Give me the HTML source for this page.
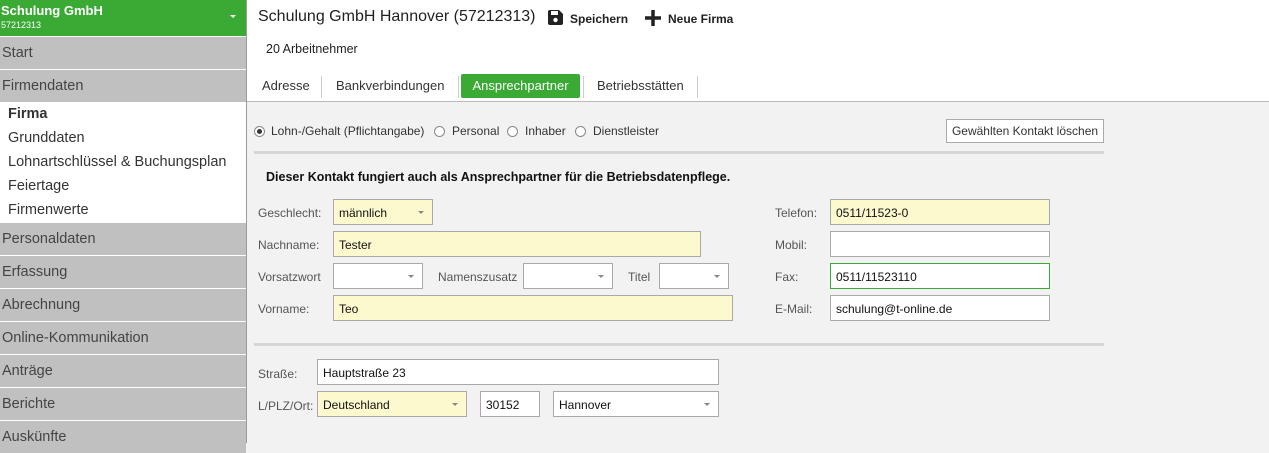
<!DOCTYPE html>
<html><head><meta charset="utf-8"><style>
*{margin:0;padding:0;box-sizing:border-box}
body{width:1269px;height:443px;overflow:hidden;font-family:"Segoe UI","Liberation Sans",sans-serif;font-size:12px;color:#222;background:#f2f2f2;position:relative}
.a{position:absolute;white-space:nowrap}
#side{position:absolute;left:0;top:0;width:247px;height:443px;background:#fff;border-right:1px solid #9a9a9a}
.hd{position:absolute;left:0;top:0;width:246px;height:36px;background:#3aaa35;color:#fff}
.it{position:absolute;left:0;width:246px;height:32px;background:#c0c0c0;color:#444;font-size:14.5px;padding:8px 0 0 2px}
.sub{position:absolute;left:8px;font-size:14.5px;color:#333}
.lbl{position:absolute;color:#555;font-size:12px}
.inp{position:absolute;height:26px;border:1px solid #a9a9a9;background:#fff;font-size:12px;padding:5px 0 0 5px;color:#111}
.y{background:#fdf9cf}
.dd::after{content:"";position:absolute;right:8px;top:11px;border-left:3px solid transparent;border-right:3px solid transparent;border-top:3px solid #888}
.rad{position:absolute;width:11px;height:11px;border:1px solid #888;border-radius:50%;background:#fff}
.tab{position:absolute;top:74px;height:24px;font-size:13px;color:#333;padding-top:4px}
.sep{position:absolute;top:76px;width:1px;height:22px;background:#ccc}
</style></head><body>
<div class="a" style="left:247px;top:0;width:1022px;height:102px;background:#fff;border-bottom:1px solid #bbb"></div>
<div id="side">
<div class="hd"><div class="a" style="left:1px;top:3px;font-weight:bold;font-size:13px">Schulung GmbH</div><div class="a" style="left:1px;top:20px;font-size:9px">57212313</div><div class="a" style="left:230px;top:15px;border-left:3px solid transparent;border-right:3px solid transparent;border-top:3px solid #fff"></div></div>
<div class="it" style="top:37px">Start</div>
<div class="it" style="top:70px">Firmendaten</div>
<div class="sub" style="top:106px;font-weight:bold">Firma</div>
<div class="sub" style="top:130px">Grunddaten</div>
<div class="sub" style="top:154px">Lohnartschlüssel &amp; Buchungsplan</div>
<div class="sub" style="top:178px">Feiertage</div>
<div class="sub" style="top:202px">Firmenwerte</div>
<div class="it" style="top:223px">Personaldaten</div>
<div class="it" style="top:256px">Erfassung</div>
<div class="it" style="top:289px">Abrechnung</div>
<div class="it" style="top:322px">Online-Kommunikation</div>
<div class="it" style="top:355px">Anträge</div>
<div class="it" style="top:388px">Berichte</div>
<div class="it" style="top:421px">Auskünfte</div>
</div>
<div class="a" style="left:258px;top:8px;font-size:16px;color:#222">Schulung GmbH Hannover (57212313)</div>
<svg class="a" style="left:547px;top:9px" width="17" height="17" viewBox="0 0 17 17"><path d="M1 3a2 2 0 0 1 2-2h9l4 4v9a2 2 0 0 1-2 2H3a2 2 0 0 1-2-2z" fill="#222"/><rect x="4" y="2" width="7" height="4" fill="#fff"/><circle cx="8.5" cy="11" r="2.2" fill="#fff"/></svg>
<div class="a" style="left:570px;top:12px;font-weight:bold;font-size:12px">Speichern</div>
<svg class="a" style="left:644px;top:9px" width="18" height="18"><path d="M9 1v16M1 9h16" stroke="#222" stroke-width="3.5"/></svg>
<div class="a" style="left:668px;top:12px;font-weight:bold;font-size:12px">Neue Firma</div>
<div class="a" style="left:266px;top:42px;font-size:12.5px">20 Arbeitnehmer</div>
<div class="tab" style="left:262px">Adresse</div>
<div class="sep" style="left:321px"></div>
<div class="tab" style="left:336px">Bankverbindungen</div>
<div class="sep" style="left:458px"></div>
<div class="tab" style="left:461px;width:119px;background:#3aaa35;color:#fff;border-radius:2px;text-align:center">Ansprechpartner</div>
<div class="sep" style="left:583px"></div>
<div class="tab" style="left:597px">Betriebsstätten</div>
<div class="sep" style="left:697px"></div>

<div class="rad" style="left:254px;top:126px"></div><div class="a" style="left:257px;top:129px;width:5px;height:5px;border-radius:50%;background:#333"></div>
<div class="lbl" style="left:271px;top:124px;color:#333">Lohn-/Gehalt (Pflichtangabe)</div>
<div class="rad" style="left:434px;top:126px"></div><div class="lbl" style="left:452px;top:124px;color:#333">Personal</div>
<div class="rad" style="left:507px;top:126px"></div><div class="lbl" style="left:525px;top:124px;color:#333">Inhaber</div>
<div class="rad" style="left:575px;top:126px"></div><div class="lbl" style="left:593px;top:124px;color:#333">Dienstleister</div>
<div class="a" style="left:946px;top:119px;width:158px;height:24px;border:1px solid #aaa;background:#fff;text-align:center;padding-top:4px;color:#333">Gewählten Kontakt löschen</div>
<div class="a" style="left:254px;top:151px;width:850px;height:3px;background:#d6d6d6"></div>
<div class="a" style="left:266px;top:170px;font-weight:bold;font-size:12.5px;color:#111">Dieser Kontakt fungiert auch als Ansprechpartner für die Betriebsdatenpflege.</div>

<div class="lbl" style="left:258px;top:206px">Geschlecht:</div>
<div class="inp y dd" style="left:333px;top:199px;width:100px;padding-top:6px">männlich</div>
<div class="lbl" style="left:258px;top:238px">Nachname:</div>
<div class="inp y" style="left:333px;top:231px;width:368px;padding-top:6px">Tester</div>
<div class="lbl" style="left:258px;top:270px">Vorsatzwort</div>
<div class="inp dd" style="left:333px;top:263px;width:90px"></div>
<div class="lbl" style="left:438px;top:270px">Namenszusatz</div>
<div class="inp dd" style="left:523px;top:263px;width:90px"></div>
<div class="lbl" style="left:628px;top:270px">Titel</div>
<div class="inp dd" style="left:659px;top:263px;width:70px"></div>
<div class="lbl" style="left:258px;top:302px">Vorname:</div>
<div class="inp y" style="left:333px;top:295px;width:400px;padding-top:6px">Teo</div>

<div class="lbl" style="left:775px;top:206px">Telefon:</div>
<div class="inp y" style="left:830px;top:199px;width:220px;padding-top:6px">0511/11523-0</div>
<div class="lbl" style="left:775px;top:238px">Mobil:</div>
<div class="inp" style="left:830px;top:231px;width:220px"></div>
<div class="lbl" style="left:775px;top:270px">Fax:</div>
<div class="inp" style="left:830px;top:263px;width:220px;border-color:#3aaa35;padding-top:6px">0511/11523110</div>
<div class="lbl" style="left:775px;top:302px">E-Mail:</div>
<div class="inp" style="left:830px;top:295px;width:220px;padding-top:6px">schulung@t-online.de</div>

<div class="a" style="left:254px;top:343px;width:850px;height:3px;background:#d6d6d6"></div>
<div class="lbl" style="left:258px;top:367px">Straße:</div>
<div class="inp" style="left:317px;top:359px;width:402px;padding-top:6px">Hauptstraße 23</div>
<div class="lbl" style="left:258px;top:399px">L/PLZ/Ort:</div>
<div class="inp y dd" style="left:317px;top:391px;width:150px;padding-top:6px">Deutschland</div>
<div class="inp" style="left:480px;top:391px;width:60px;padding-top:6px">30152</div>
<div class="inp dd" style="left:553px;top:391px;width:166px;padding-top:6px">Hannover</div>
</body></html>
